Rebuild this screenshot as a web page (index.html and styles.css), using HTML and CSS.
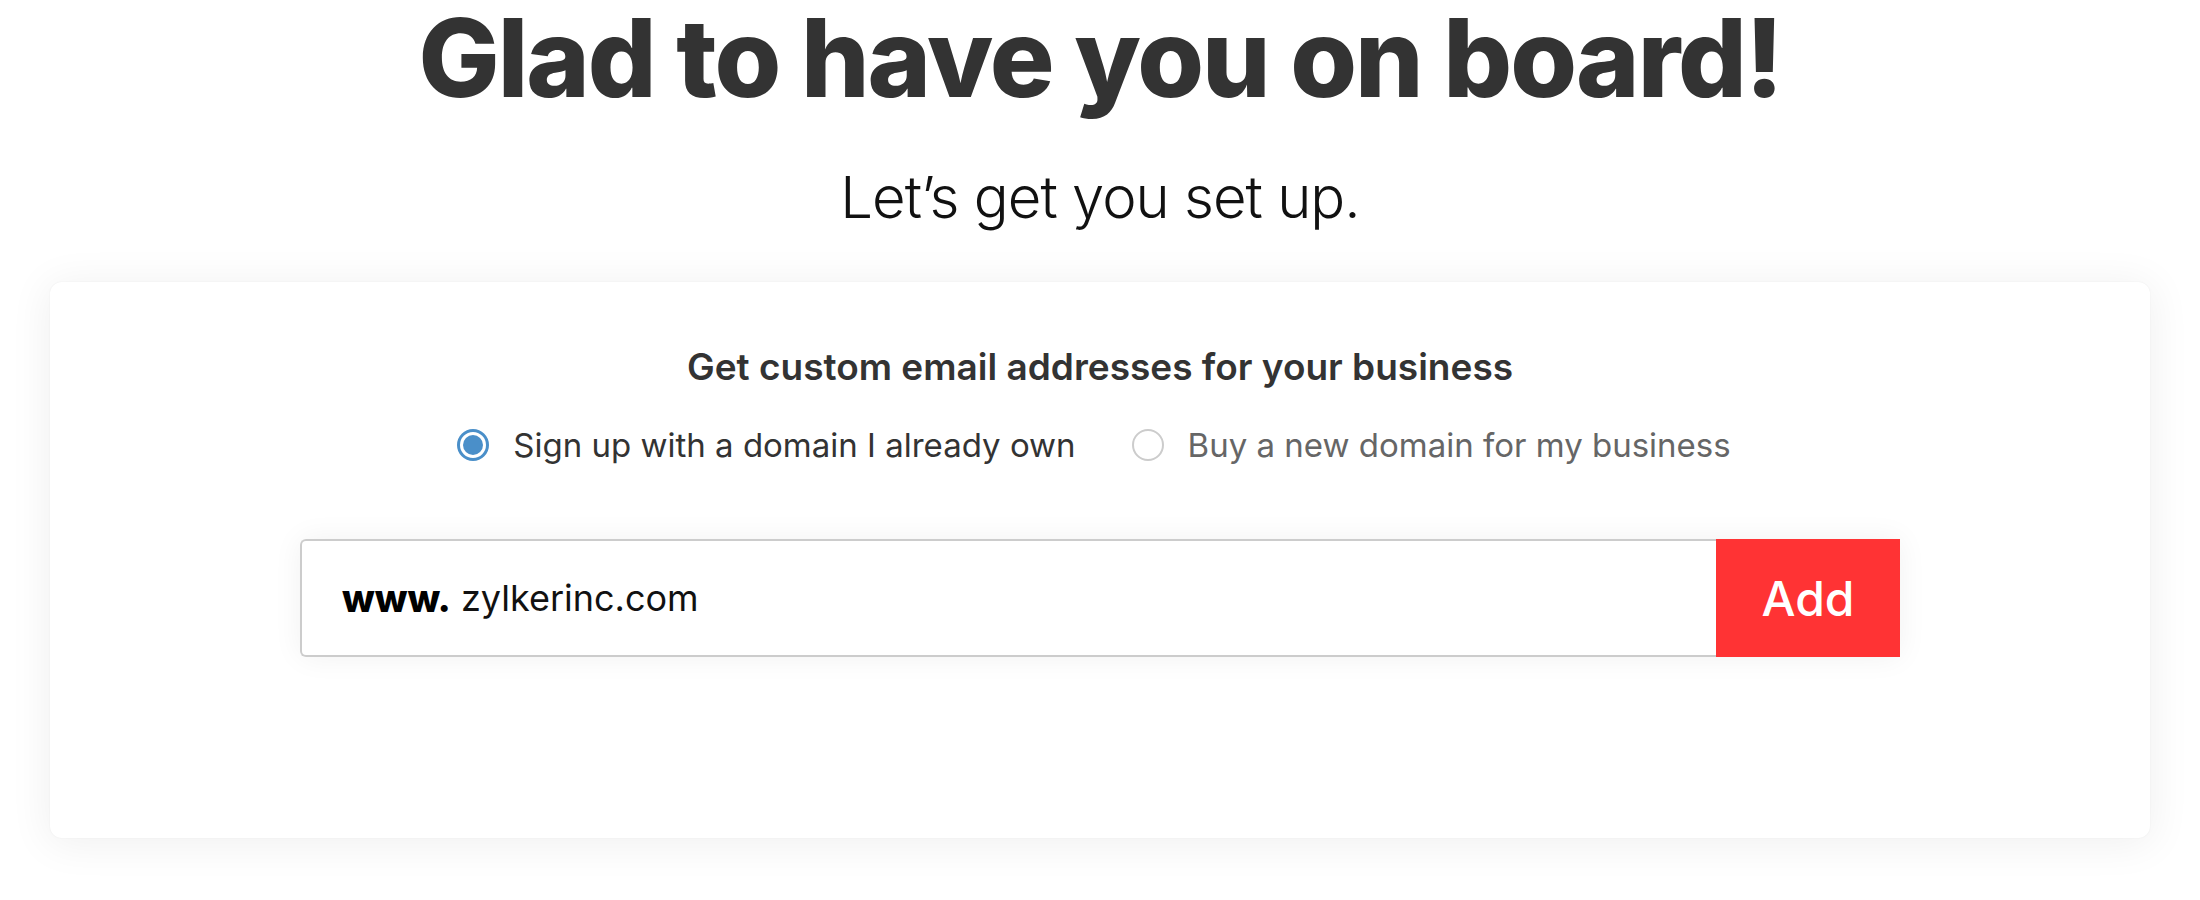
FILE: index.html
```html
<!DOCTYPE html>
<html lang="en">
<head>
<meta charset="utf-8">
<title>Glad to have you on board!</title>
<link rel="stylesheet" href="styles.css">
</head>
<body>
<main class="page">
  <header class="intro">
    <h1 class="title">Glad to have you on board!</h1>
    <p class="subtitle">Let’s get you set up.</p>
  </header>
  <section class="card">
    <h2 class="card-heading">Get custom email addresses for your business</h2>
    <div class="options">
      <label class="option option-active">
        <span class="radio radio-checked"><span class="radio-dot"></span></span>
        <span class="option-text">Sign up with a domain I already own</span>
      </label>
      <label class="option">
        <span class="radio"></span>
        <span class="option-text">Buy a new domain for my business</span>
      </label>
    </div>
    <div class="domain-form">
      <div class="domain-input">
        <span class="prefix">www.</span>
        <span class="domain-value">zylkerinc.com</span>
      </div>
      <button class="add-btn" type="button">Add</button>
    </div>
  </section>
</main>
</body>
</html>
```

FILE: styles.css
```css
* { box-sizing: border-box; }

html, body {
  margin: 0;
  padding: 0;
  background: #ffffff;
}

body {
  font-family: Inter, "Noto Sans", sans-serif;
  color: #333333;
}

.page {
  width: 2200px;
  height: 900px;
  overflow: hidden;
  display: flex;
  flex-direction: column;
  align-items: center;
}

.intro {
  display: flex;
  flex-direction: column;
  align-items: center;
}

.title {
  margin: 0;
  padding-top: 4px;
  font-size: 108px;
  line-height: 108px;
  font-weight: 800;
  letter-spacing: -2px;
  color: #333333;
}

.subtitle {
  margin: 56px 0 0;
  font-size: 58px;
  line-height: 58px;
  font-weight: 300;
  letter-spacing: -1px;
  color: #111111;
}

.card {
  margin-top: 56px;
  width: 2100px;
  height: 556px;
  border-radius: 12px;
  background: #ffffff;
  box-shadow: 0 0 2px rgba(0, 0, 0, 0.06), 0 4px 40px 4px rgba(0, 0, 0, 0.06);
  padding-top: 63px;
  display: flex;
  flex-direction: column;
  align-items: center;
}

.card-heading {
  margin: 0;
  font-size: 37px;
  line-height: 44px;
  font-weight: 600;
  color: #333333;
}

.options {
  margin-top: 36px;
  margin-right: 12px;
  display: flex;
  align-items: center;
  gap: 56px;
}

.option {
  display: flex;
  align-items: center;
  gap: 24px;
  font-size: 33px;
  color: #666666;
}

.option-active { color: #333333; }

.radio {
  width: 32px;
  height: 32px;
  border-radius: 50%;
  border: 2px solid #cccccc;
  display: flex;
  align-items: center;
  justify-content: center;
  flex: none;
}

.radio-checked {
  border: 3px solid #4a8fc9;
}

.radio-dot {
  width: 20px;
  height: 20px;
  border-radius: 50%;
  background: #4a8fc9;
}

.domain-form {
  margin-top: 74px;
  width: 1600px;
  height: 118px;
  display: flex;
  box-shadow: 0 0 30px rgba(0, 0, 0, 0.06);
  border-radius: 6px 0 0 6px;
}

.domain-input {
  flex: 1;
  display: flex;
  align-items: center;
  gap: 10px;
  padding-left: 40px;
  border: 2px solid #cccccc;
  border-right: none;
  border-radius: 6px 0 0 6px;
  font-size: 36px;
  color: #111111;
}

.prefix {
  font-weight: 800;
  color: #000000;
  font-size: 38px;
}

.add-btn {
  width: 184px;
  border: none;
  margin: 0;
  padding: 0;
  background: #ff3334;
  color: #ffffff;
  font-family: Inter, "Noto Sans", sans-serif;
  font-size: 48px;
  font-weight: 500;
}
```
